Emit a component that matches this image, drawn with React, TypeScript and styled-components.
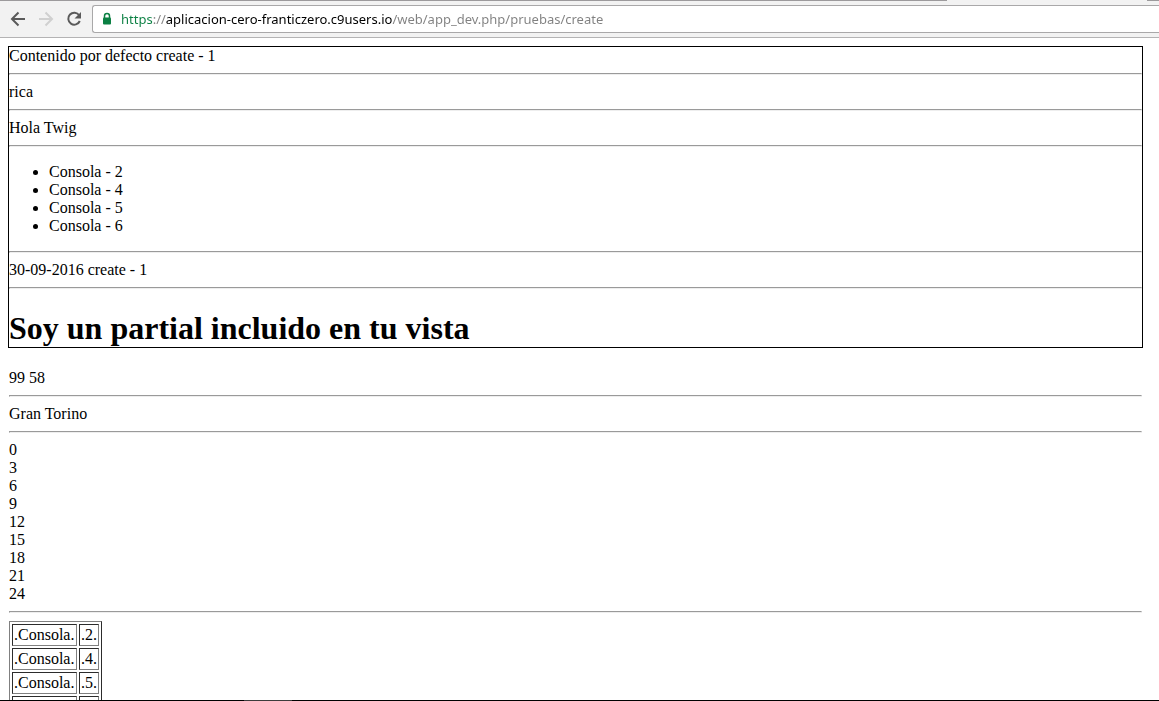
import React from "react";
import styled, { createGlobalStyle } from "styled-components";

const GlobalStyle = createGlobalStyle`
  body {
    margin: 0;
    background: #fff;
  }
`;

const Window = styled.div`
  display: flex;
  flex-direction: column;
  height: 100vh;
  overflow: hidden;
  color: #000;
  font-family: "Liberation Serif", "Times New Roman", serif;
  font-size: 16px;
  line-height: 18px;
`;

const TabEdge = styled.div`
  display: flex;
  justify-content: space-between;
  flex: none;
  height: 1px;
  background: #f2f2f2;
`;

const Edge = styled.span<{ $width: string }>`
  width: ${(p) => p.$width};
  background: #9c9a9c;
`;

const Toolbar = styled.header`
  display: flex;
  align-items: center;
  flex: none;
  padding: 4px 0 4px 8px;
  background: #f2f2f2;
  border-bottom: 1px solid #b4b3b4;
`;

const NavButton = styled.button`
  display: flex;
  width: 20px;
  height: 20px;
  margin-right: 8px;
  padding: 0;
  border: 0;
  background: none;
  color: #5a5a5a;

  &:disabled {
    color: #d0d0d0;
  }
`;

const AddressBar = styled.label`
  display: flex;
  align-items: center;
  flex: 1;
  height: 26px;
  padding-left: 8px;
  border: 1px solid #a9a8a9;
  border-right: 0;
  border-radius: 3px 0 0 3px;
  background: #fff;
`;

/* The scheme is green, the host black and the rest of the address gray. */
const UrlInput = styled.input`
  flex: 1;
  min-width: 0;
  height: 24px;
  margin: 0 0 0 8px;
  padding: 0;
  border: 0;
  outline: 0;
  font: 13px/24px "Noto Sans", "Open Sans", sans-serif;
  color: transparent;
  background: linear-gradient(
    to right,
    #0b8043 32px,
    #808080 32px 45px,
    #000 45px 271px,
    #808080 271px
  );
  -webkit-background-clip: text;
  background-clip: text;
`;

const Viewport = styled.main`
  flex: 1;
  min-height: 0;
  overflow: hidden;
  padding: 8px 16px 0 8px;
`;

const Framed = styled.section`
  border: 1px solid #000;
`;

const Plain = styled.section`
  padding: 21px 1px 0;
`;

const Rule = styled.hr`
  margin: 8px 0;
  border: 1px solid;
  border-color: #9a9a9a #eee #eee #9a9a9a;
`;

const List = styled.ul`
  margin: 16px 0;
  padding-left: 40px;
`;

const Title = styled.h1`
  margin: 21px 0 0;
  font-size: 32px;
  line-height: 37px;
`;

const Table = styled.table`
  border: 1px solid;
  border-color: #808080 #2c2c2c #2c2c2c #808080;
  border-spacing: 2px;
`;

const Cell = styled.td`
  padding: 1px;
  border: 1px solid;
  border-color: #2c2c2c #808080 #808080 #2c2c2c;

  &:first-child {
    min-width: 61px;
  }
`;

const BottomEdge = styled.footer`
  flex: none;
  height: 1px;
  background: #000;
`;

const ActiveTask = styled.div`
  width: 48px;
  height: 1px;
  margin-left: 244px;
  background: #3c3c3c;
`;

const consoles = [2, 4, 5, 6];
const multiples = [0, 3, 6, 9, 12, 15, 18, 21, 24];

export default function App() {
  return (
    <Window>
      <GlobalStyle />
      <TabEdge>
        <Edge $width="947px" />
        <Edge $width="12px" />
      </TabEdge>
      <Toolbar>
        <NavButton aria-label="Atrás">
          <svg width="20" height="20" fill="none" stroke="currentColor" strokeWidth="2">
            <path d="M17 10H4.500M10.500 3.500L4 10l6.500 6.500" />
          </svg>
        </NavButton>
        <NavButton aria-label="Adelante" disabled>
          <svg width="20" height="20" fill="none" stroke="currentColor" strokeWidth="2">
            <path d="M3 10h12.500M9.500 3.500L16 10l-6.500 6.500" />
          </svg>
        </NavButton>
        <NavButton aria-label="Recargar">
          <svg width="20" height="20" fill="none" stroke="currentColor" strokeWidth="2">
            <path d="M15.200 6.200A6 6 0 1 0 15.800 12" />
            <path d="M17 3v6.500h-6.500z" fill="currentColor" stroke="none" />
          </svg>
        </NavButton>
        <AddressBar>
          <svg width="12" height="14" aria-hidden="true">
            <path d="M3.500 6V4a2.500 2.500 0 0 1 5 0v2" fill="none" stroke="#0b8043" strokeWidth="1.500" />
            <rect x="2" y="5.500" width="8" height="7" rx="1" fill="#0b8043" />
          </svg>
          <UrlInput
            aria-label="Dirección"
            spellCheck={false}
            defaultValue="https://aplicacion-cero-franticzero.c9users.io/web/app_dev.php/pruebas/create"
          />
        </AddressBar>
      </Toolbar>
      <Viewport>
        <Framed>
          <div>Contenido por defecto create - 1</div>
          <Rule />
          <div>rica</div>
          <Rule />
          <div>Hola Twig</div>
          <Rule />
          <List>
            {consoles.map((n) => (
              <li key={n}>Consola - {n}</li>
            ))}
          </List>
          <Rule />
          <div>30-09-2016 create - 1</div>
          <Rule />
          <Title>Soy un partial incluido en tu vista</Title>
        </Framed>
        <Plain>
          <div>99 58</div>
          <Rule />
          <div>Gran Torino</div>
          <Rule />
          {multiples.map((n) => (
            <div key={n}>{n}</div>
          ))}
          <Rule />
          <Table>
            <tbody>
              {consoles.map((n) => (
                <tr key={n}>
                  <Cell>.Consola.</Cell>
                  <Cell>.{n}.</Cell>
                </tr>
              ))}
            </tbody>
          </Table>
        </Plain>
      </Viewport>
      <BottomEdge>
        <ActiveTask />
      </BottomEdge>
    </Window>
  );
}
